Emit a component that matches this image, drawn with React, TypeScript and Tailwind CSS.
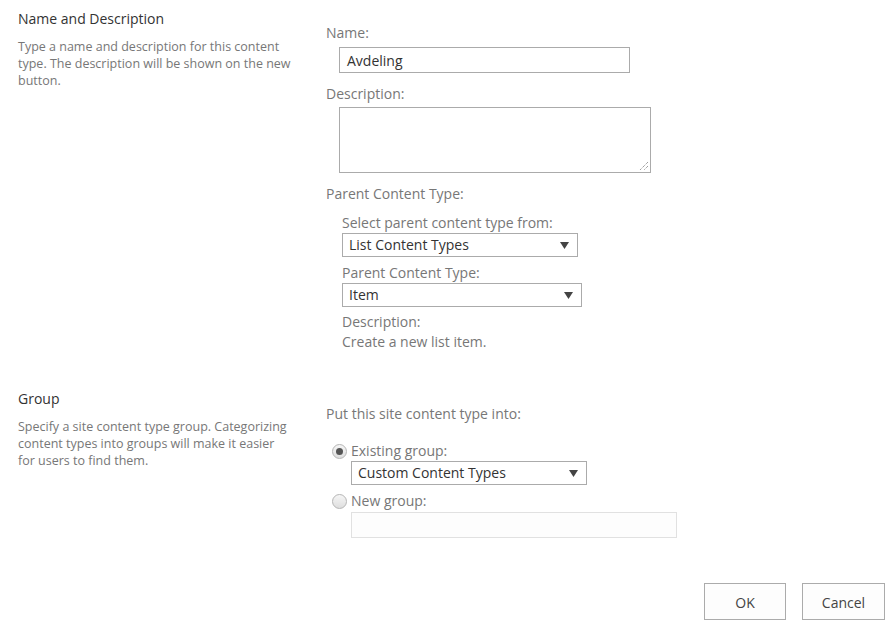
import React from "react";

const font = { fontFamily: '"Open Sans", "Noto Sans", sans-serif' };

function Arrow() {
  return (
    <svg width="9" height="7" viewBox="0 0 9 7" className="shrink-0">
      <path d="M0 0 L9 0 L4.5 7 Z" fill="#444" />
    </svg>
  );
}

function Select({ value, width }: { value: string; width: string }) {
  return (
    <div
      className={`flex h-[24px] items-center justify-between border border-[#ababab] bg-white pl-[6px] pr-[8px] text-[14px] leading-[20px] text-[#333] ${width}`}
    >
      <span>{value}</span>
      <Arrow />
    </div>
  );
}

function Radio({ checked }: { checked: boolean }) {
  return (
    <span className="flex h-[15px] w-[15px] items-center justify-center rounded-full border border-[#b5b5b5] bg-gradient-to-b from-[#f6f6f6] to-[#dedede]">
      {checked && <span className="h-[7px] w-[7px] rounded-full bg-[#555]" />}
    </span>
  );
}

export default function App() {
  return (
    <div className="h-[628px] w-[895px] bg-white text-[#444]" style={font}>
      {/* Section 1 */}
      <div className="flex">
        <div className="w-[326px] pl-[18px] pt-[9px]">
          <div className="text-[14px] leading-[20px] text-[#333]">Name and Description</div>
          <div className="mt-[9px] whitespace-nowrap text-[12.5px] leading-[17px] text-[#777]">
            Type a name and description for this content
            <br />
            type. The description will be shown on the new
            <br />
            button.
          </div>
        </div>
        <div className="flex flex-col pt-[23px]">
          <div className="text-[14px] leading-[20px] text-[#777]">Name:</div>
          <div className="ml-[13px] mt-[4px] flex h-[26px] w-[291px] items-center border border-[#ababab] pl-[7px] text-[14px] text-[#333]">
            Avdeling
          </div>
          <div className="mt-[11px] text-[14px] leading-[20px] text-[#777]">Description:</div>
          <div className="relative ml-[13px] mt-[3px] h-[66px] w-[312px] border border-[#ababab]">
            <svg className="absolute bottom-[1px] right-[1px]" width="11" height="11" viewBox="0 0 11 11">
              <path d="M10 2 L2 10 M10 6 L6 10" stroke="#777" strokeWidth="1" strokeDasharray="1 1" />
            </svg>
          </div>
          <div className="mt-[11px] text-[14px] leading-[20px] text-[#777]">Parent Content Type:</div>
          <div className="ml-[16px] mt-[9px] flex flex-col">
            <div className="text-[14px] leading-[20px] text-[#777]">Select parent content type from:</div>
            <Select value="List Content Types" width="w-[236px]" />
            <div className="mt-[6px] text-[14px] leading-[20px] text-[#777]">Parent Content Type:</div>
            <Select value="Item" width="w-[240px]" />
            <div className="mt-[5px] text-[14px] leading-[20px] text-[#777]">Description:</div>
            <div className="text-[14px] leading-[20px] text-[#777]">Create a new list item.</div>
          </div>
        </div>
      </div>

      {/* Section 2 */}
      <div className="mt-[37px] flex">
        <div className="w-[326px] pl-[18px]">
          <div className="text-[14px] leading-[20px] text-[#333]">Group</div>
          <div className="mt-[9px] whitespace-nowrap text-[12.5px] leading-[17px] text-[#777]">
            Specify a site content type group. Categorizing
            <br />
            content types into groups will make it easier
            <br />
            for users to find them.
          </div>
        </div>
        <div className="flex flex-col pt-[15px]">
          <div className="text-[14px] leading-[20px] text-[#777]">Put this site content type into:</div>
          <div className="mt-[17px] flex items-center gap-[4px] pl-[6px]">
            <Radio checked />
            <span className="text-[14px] leading-[20px] text-[#777]">Existing group:</span>
          </div>
          <div className="ml-[25px]">
            <Select value="Custom Content Types" width="w-[236px]" />
          </div>
          <div className="mt-[6px] flex items-center gap-[4px] pl-[6px]">
            <Radio checked={false} />
            <span className="text-[14px] leading-[20px] text-[#777]">New group:</span>
          </div>
          <div className="ml-[25px] mt-[1px] h-[26px] w-[326px] border border-[#e1e1e1] bg-[#fdfdfd]" />
        </div>
      </div>

      {/* Buttons */}
      <div className="mt-[45px] flex justify-end gap-[16px] pr-[10px]">
        <button className="h-[37px] w-[82px] border border-[#ababab] bg-[#fdfdfd] pt-[1px] text-[14px] text-[#444]">OK</button>
        <button className="h-[37px] w-[83px] border border-[#ababab] bg-[#fdfdfd] pt-[1px] text-[14px] text-[#444]">Cancel</button>
      </div>
    </div>
  );
}
